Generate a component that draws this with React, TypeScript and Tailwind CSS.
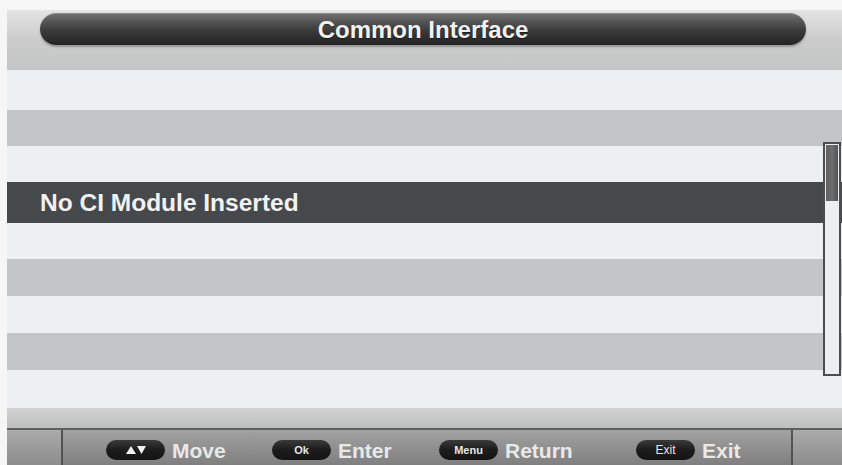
import React from "react";

// Rows of the list, index 3 is the highlighted entry
const rows = [
  { tone: "light", h: "h-[40px]" },
  { tone: "gray", h: "h-[36px]" },
  { tone: "light", h: "h-[36px]" },
  { tone: "dark", h: "h-[41px]", label: "No CI Module Inserted" },
  { tone: "light", h: "h-[36px]" },
  { tone: "gray", h: "h-[37px]" },
  { tone: "light", h: "h-[37px]" },
  { tone: "gray", h: "h-[37px]" },
  { tone: "light", h: "h-[38px]" },
];

function Pill({ children }: { children: React.ReactNode }) {
  return (
    <div className="flex h-[20px] w-[59px] items-center justify-center rounded-full bg-linear-to-b from-[#3a3a3a] via-[#1c1c1c] to-[#141414] text-[11px] font-bold text-[#e6e6e6]">
      {children}
    </div>
  );
}

function Hint({ pill, label, width }: { pill: React.ReactNode; label: string; width: string }) {
  return (
    <div className={`flex items-center gap-[7px] ${width}`}>
      <Pill>{pill}</Pill>
      <span className="text-[21px] font-bold leading-none text-[#e9e9e9]">{label}</span>
    </div>
  );
}

export default function App() {
  return (
    <div
      className="flex h-[465px] w-[842px] flex-col bg-[#f6f6f6] pl-[7px] pt-[10px]"
      style={{ fontFamily: '"Liberation Sans", Arial, sans-serif' }}
    >
      {/* Header */}
      <div className="h-[60px] shrink-0 bg-linear-to-b from-[#e4e4e4] via-[#cbcbcb] to-[#c4c5c6] pl-[33px] pr-[36px] pt-[3px]">
        <div className="flex h-[32px] items-center justify-center rounded-full border-t border-[#8a8a8a] bg-linear-to-b from-[#6e6e6e] via-[#3d3d3d] to-[#232323] shadow-[0_2px_2px_rgba(0,0,0,0.25)]">
          <span className="text-[24px] font-bold leading-none text-[#f2f2f2] [text-shadow:0_1px_1px_rgba(0,0,0,0.5)]">
            Common Interface
          </span>
        </div>
      </div>

      {/* List */}
      <div className="relative flex h-[338px] shrink-0 flex-col">
        {rows.map((row, i) => (
          <div
            key={i}
            className={`${row.h} shrink-0 ${
              row.tone === "dark"
                ? "flex items-center bg-[#46494c] pl-[33px] pt-[2px]"
                : row.tone === "gray"
                ? "bg-[#c3c6c8]"
                : "bg-[#edf0f2]"
            }`}
          >
            {row.label && (
              <span className="text-[24.5px] font-bold leading-none text-[#f1f1f1]">{row.label}</span>
            )}
          </div>
        ))}

        {/* Scrollbar */}
        <div className="absolute right-[1px] top-[72px] flex h-[234px] w-[18px] flex-col border-2 border-[#4b4d4f] bg-[#eceff1] p-[1px]">
          <div className="h-[56px] bg-linear-to-r from-[#5e6062] via-[#6c6e70] to-[#505254]" />
        </div>
      </div>

      {/* Separator band */}
      <div className="h-[20px] shrink-0 bg-linear-to-b from-[#d3d3d3] to-[#bdbebf]" />

      {/* Footer */}
      <div className="flex h-[37px] shrink-0 border-t-2 border-[#5e5e5e] bg-linear-to-b from-[#a2a2a2] via-[#909090] to-[#7f7f7f]">
        <div className="w-[56px] border-r-2 border-[#525252] bg-linear-to-b from-[#ababab] to-[#8c8c8c]" />
        <div className="flex flex-1 items-center pl-[43px] pt-[5px]">
          <Hint
            width="w-[166px]"
            label="Move"
            pill={
              <svg width="22" height="10" viewBox="0 0 22 10">
                <polygon points="1,9 6,1 11,9" fill="#f2f2f2" />
                <polygon points="12,1 21,1 16.5,9" fill="#f2f2f2" />
              </svg>
            }
          />
          <Hint width="w-[167px]" label="Enter" pill="Ok" />
          <Hint width="w-[197px]" label="Return" pill="Menu" />
          <Hint width="w-[150px]" label="Exit" pill={<span className="text-[12px] font-normal">Exit</span>} />
        </div>
        <div className="w-[51px] border-l-2 border-[#525252] bg-linear-to-b from-[#ababab] to-[#8c8c8c]" />
      </div>
    </div>
  );
}
